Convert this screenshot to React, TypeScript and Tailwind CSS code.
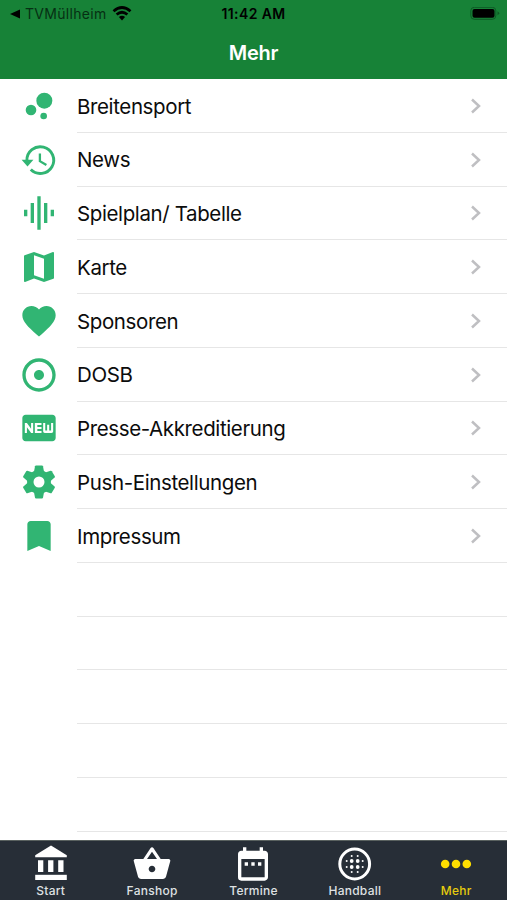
import React from "react";
import {
  MdAdjust,
  MdBookmark,
  MdBubbleChart,
  MdDateRange,
  MdFavorite,
  MdFiberNew,
  MdGraphicEq,
  MdMap,
  MdShoppingBasket,
} from "react-icons/md";

const HistoryIcon: React.FC = () => (
  <svg viewBox="0 0 40 40" className="size-10" fill="none" stroke="currentColor">
    <path d="M7.9 20.5A13.4 13.4 0 1 1 11.8 29.6" strokeWidth="2.9" />
    <path d="M2.6 19.7H14.4L8.5 26.6Z" fill="currentColor" stroke="none" />
    <path d="M20.9 13.4V21.2L27.4 25" strokeWidth="2.3" />
  </svg>
);

const GearIcon: React.FC = () => (
  <svg viewBox="0 0 40 40" className="size-10" fill="currentColor">
    <circle cx="20" cy="20" r="8.7" fill="none" stroke="currentColor" strokeWidth="6.4" />
    {[0, 60, 120, 180, 240, 300].map((angle) => (
      <path
        key={angle}
        d="M15 9.8L16 4.3Q16.2 3.5 17 3.5H23Q23.8 3.5 24 4.3L25 9.8L24 12H16Z"
        transform={`rotate(${angle} 20 20)`}
      />
    ))}
  </svg>
);

const BankIcon: React.FC = () => (
  <svg viewBox="0 0 40 40" className="size-10" fill="currentColor">
    <path d="M4.2 11.2L20 1.4L35.8 11.2V13.2H4.2Z" />
    <path d="M7 16.2H12.3V28H7ZM17.1 16.2H22.4V28H17.1ZM27.2 16.2H32.5V28H27.2Z" />
    <path d="M4.2 30.8H35.8V36H4.2Z" />
  </svg>
);

const HandballIcon: React.FC = () => {
  const steps = [-8, -3, 3, 8];
  return (
    <svg viewBox="0 0 40 40" className="size-10">
      <circle cx="19.7" cy="20" r="14.9" fill="none" stroke="currentColor" strokeWidth="3" />
      {steps.map((y) =>
        steps.map((x) => {
          const outer = Math.abs(x) + Math.abs(y);
          if (outer > 12) return null;
          return <circle key={`${x},${y}`} cx={x + 19.7} cy={y + 20} r={outer > 8 ? 1 : 1.9} fill="currentColor" />;
        })
      )}
    </svg>
  );
};

const MoreIcon: React.FC = () => (
  <svg viewBox="0 0 40 40" className="size-10" fill="currentColor">
    <circle cx="9.2" cy="20" r="4.3" />
    <circle cx="20" cy="20" r="4.3" />
    <circle cx="30.8" cy="20" r="4.3" />
  </svg>
);

const ITEMS = [
  { title: "Breitensport", icon: <MdBubbleChart size={40} /> },
  { title: "News", icon: <HistoryIcon /> },
  { title: "Spielplan/ Tabelle", icon: <MdGraphicEq size={40} /> },
  { title: "Karte", icon: <MdMap size={40} /> },
  { title: "Sponsoren", icon: <MdFavorite size={40} /> },
  { title: "DOSB", icon: <MdAdjust size={40} /> },
  { title: "Presse-Akkreditierung", icon: <MdFiberNew size={40} /> },
  { title: "Push-Einstellungen", icon: <GearIcon /> },
  { title: "Impressum", icon: <MdBookmark size={40} /> },
];

const TABS = [
  { label: "Start", icon: <BankIcon /> },
  { label: "Fanshop", icon: <MdShoppingBasket size={40} /> },
  { label: "Termine", icon: <MdDateRange size={40} /> },
  { label: "Handball", icon: <HandballIcon /> },
  { label: "Mehr", icon: <MoreIcon />, active: true },
];

const EMPTY_ROWS = [0, 1, 2, 3, 4];

export default function App() {
  return (
    <div className="flex h-[900px] w-[507px] flex-col overflow-hidden bg-white font-['Inter','Liberation_Sans',sans-serif]">
      <header className="h-[79px] shrink-0 bg-[#178237]">
        <div className="grid h-[27px] grid-cols-3 items-center text-black">
          <div className="flex items-center pl-[10px]">
            <svg viewBox="0 0 10 10" className="size-[10px]">
              <path d="M0 5L10 0.5V9.5Z" fill="currentColor" />
            </svg>
            <span className="ml-[5px] text-[14px] tracking-[0.3px] text-[#062f13]">TVMüllheim</span>
            <svg viewBox="0 0 20 15" className="ml-[5px] h-[15px] w-5" fill="none" stroke="currentColor" strokeWidth="2.7">
              <path d="M1.5 5.2Q10-2.2 18.5 5.2" />
              <path d="M4.6 8.6Q10 3.9 15.4 8.6" />
              <path d="M6.9 11.1Q10 8.3 13.1 11.1L10 14.4Z" fill="currentColor" stroke="none" />
            </svg>
          </div>
          <span className="text-center text-[14px] font-semibold tracking-[0.4px]">11:42 AM</span>
          <svg viewBox="0 0 30 14" className="mr-[7px] h-[14px] w-[30px] justify-self-end">
            <rect x="0.8" y="0.3" width="25" height="12" rx="3.5" fill="none" stroke="#0d5a25" strokeWidth="1" />
            <rect x="2.5" y="2" width="22" height="8.8" rx="2" fill="#000" />
            <path d="M27.5 4.3V8.3Q29.2 7.5 29.2 6.3T27.5 4.3Z" fill="#0d5a25" />
          </svg>
        </div>
        <h1 className="pt-[11px] text-center text-[20px] font-semibold leading-[30px] tracking-[-0.2px] text-white">Mehr</h1>
      </header>

      <main className="min-h-0 flex-1 overflow-hidden">
        {ITEMS.map((item) => (
          <div key={item.title} className="flex h-[53.75px] items-center pl-[19px]">
            <span className="flex size-10 shrink-0 items-center justify-center text-[#31b573]">{item.icon}</span>
            <div className="ml-[18px] flex h-full flex-1 items-center justify-between border-b border-[#e6e6e6] pr-[26px]">
              <span className="pt-[3px] text-[20.5px] tracking-[-0.38px] text-[#0c0c0c]">{item.title}</span>
              <svg viewBox="0 0 10 16" className="mt-px h-4 w-[10px]" fill="none" stroke="#bfbfc2" strokeWidth="2.5">
                <path d="M1 1.5L8 8L1 14.5" />
              </svg>
            </div>
          </div>
        ))}
        {EMPTY_ROWS.map((row) => (
          <div key={row} className="ml-[77px] h-[53.75px] border-b border-[#e6e6e6]" />
        ))}
      </main>

      <nav className="grid h-[60px] shrink-0 grid-cols-5 border-t border-[#59615f] bg-[#272e37]">
        {TABS.map((tab) => (
          <div key={tab.label} className={`flex flex-col items-center pt-[3px] ${tab.active ? "text-[#ffdf00]" : "text-white"}`}>
            {tab.icon}
            <span className={`text-[12px] font-medium leading-[14px] tracking-[0.25px] ${tab.active ? "text-[#e5cb0c]" : "text-[#dfe1e3]"}`}>
              {tab.label}
            </span>
          </div>
        ))}
      </nav>
    </div>
  );
}
